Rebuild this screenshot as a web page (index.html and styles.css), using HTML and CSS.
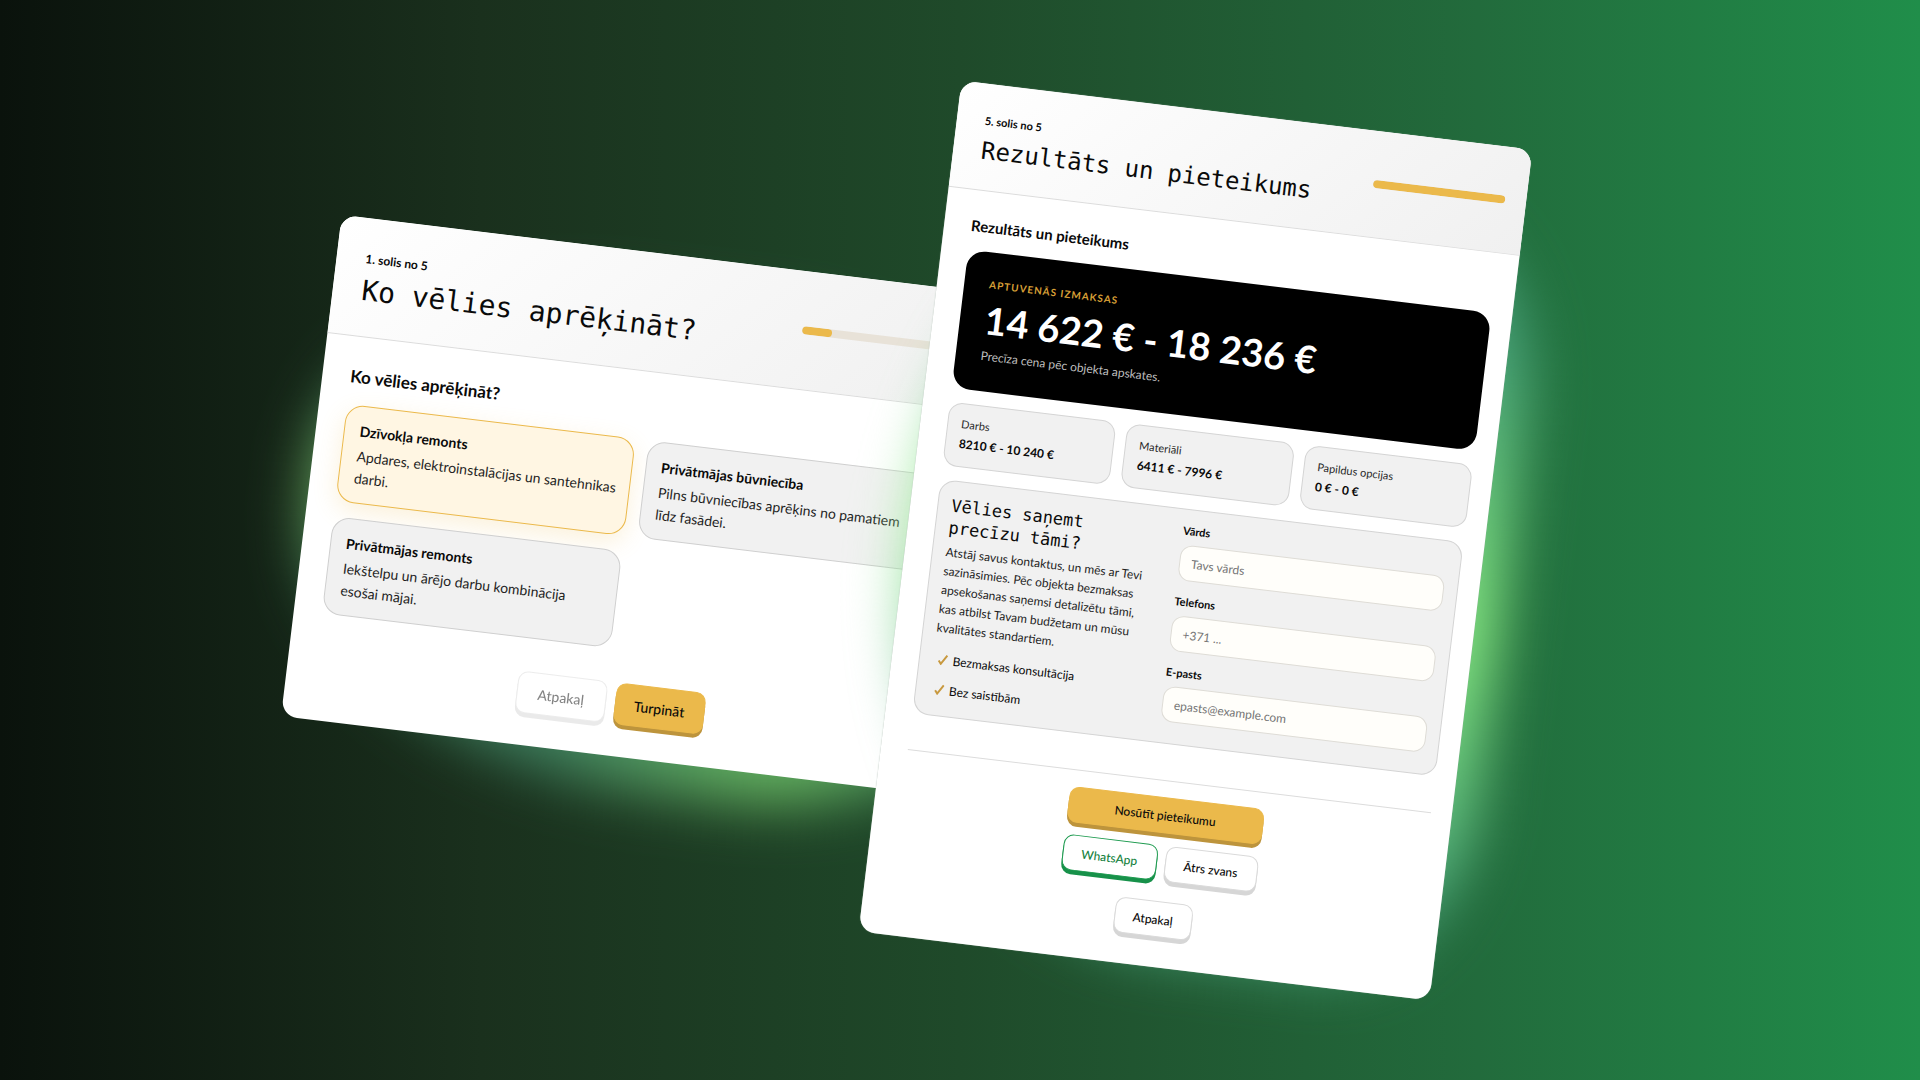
FILE: index.html
```html
<!DOCTYPE html>
<html lang="lv">
<head>
<meta charset="utf-8">
<meta name="viewport" content="width=device-width, initial-scale=1">
<title>Remonta kalkulators</title>
<link rel="stylesheet" href="styles.css">
</head>
<body>
<main class="stage">
  <section class="sheet sheet-start">
    <div class="glow"></div>
    <div class="panel">
      <header class="head">
        <div>
          <p class="step">1. solis no 5</p>
          <h1 class="title">Ko vēlies aprēķināt?</h1>
        </div>
        <div class="progress"><div class="progress-fill" style="width:20%"></div></div>
      </header>
      <div class="body">
        <h2 class="subtitle">Ko vēlies aprēķināt?</h2>
        <div class="options">
          <article class="option option-selected">
            <h3>Dzīvokļa remonts</h3>
            <p>Apdares, elektroinstalācijas un santehnikas darbi.</p>
          </article>
          <article class="option">
            <h3>Privātmājas būvniecība</h3>
            <p>Pilns būvniecības aprēķins no pamatiem līdz fasādei.</p>
          </article>
          <article class="option">
            <h3>Privātmājas remonts</h3>
            <p>Iekštelpu un ārējo darbu kombinācija esošai mājai.</p>
          </article>
        </div>
        <div class="actions">
          <button class="btn" type="button" disabled>Atpakaļ</button>
          <button class="btn btn-primary" type="button">Turpināt</button>
        </div>
      </div>
    </div>
  </section>

  <section class="sheet sheet-result">
    <div class="glow"></div>
    <div class="panel">
      <header class="head">
        <div>
          <p class="step">5. solis no 5</p>
          <h1 class="title">Rezultāts un pieteikums</h1>
        </div>
        <div class="progress"><div class="progress-fill" style="width:100%"></div></div>
      </header>
      <form class="body">
        <h2 class="subtitle">Rezultāts un pieteikums</h2>
        <div class="total">
          <p class="total-label">Aptuvenās izmaksas</p>
          <p class="total-price">14 622 € - 18 236 €</p>
          <p class="total-note">Precīza cena pēc objekta apskates.</p>
        </div>
        <div class="stats">
          <div class="stat"><span>Darbs</span><strong>8210 € - 10 240 €</strong></div>
          <div class="stat"><span>Materiāli</span><strong>6411 € - 7996 €</strong></div>
          <div class="stat"><span>Papildus opcijas</span><strong>0 € - 0 €</strong></div>
        </div>
        <div class="contact">
          <div class="pitch">
            <h3>Vēlies saņemt precīzu tāmi?</h3>
            <p>Atstāj savus kontaktus, un mēs ar Tevi sazināsimies. Pēc objekta bezmaksas apsekošanas saņemsi detalizētu tāmi, kas atbilst Tavam budžetam un mūsu kvalitātes standartiem.</p>
            <ul>
              <li><svg class="tick" viewBox="0 0 10 12"><path d="M1 7.5 3.4 10.5 9 1.5"/></svg>Bezmaksas konsultācija</li>
              <li><svg class="tick" viewBox="0 0 10 12"><path d="M1 7.5 3.4 10.5 9 1.5"/></svg>Bez saistībām</li>
            </ul>
          </div>
          <div class="fields">
            <label for="name">Vārds</label>
            <input id="name" type="text" placeholder="Tavs vārds">
            <label for="phone">Telefons</label>
            <input id="phone" type="tel" placeholder="+371 ...">
            <label for="email">E-pasts</label>
            <input id="email" type="email" placeholder="epasts@example.com">
          </div>
        </div>
        <div class="submit">
          <div class="submit-grid">
            <button class="btn btn-primary btn-wide" type="button">Nosūtīt pieteikumu</button>
            <button class="btn btn-whatsapp" type="button">WhatsApp</button>
            <button class="btn" type="button">Ātrs zvans</button>
          </div>
          <button class="btn btn-back" type="button">Atpakaļ</button>
        </div>
      </form>
    </div>
  </section>
</main>
</body>
</html>
```
FILE: styles.css
```css
* { box-sizing: border-box; }
body, h1, h2, h3, p, ul { margin: 0; }
ul { padding: 0; list-style: none; }
body {
  font-family: Lato, "Open Sans", sans-serif;
  color: #0a0a0a;
  overflow: hidden;
}

/* canvas holding the two tilted sheets */
.stage {
  display: flex;
  justify-content: center;
  align-items: center;
  min-height: 100vh;
  padding-right: 128px;
  background: linear-gradient(90deg, #0a120c 0%, #1a301d 25%, #1f4a2a 50%, #226b3c 77%, #208e4a 100%);
}
.sheet {
  position: relative;
  flex: none;
  transform: rotate(6.9deg);
}
.sheet-start { width: 650px; margin-bottom: 72px; }
.sheet-result { width: 575px; margin-left: -51px; }
.panel {
  position: relative;
  overflow: hidden;
  background: #fff;
  border-radius: 16px;
}
.sheet-result .panel { box-shadow: 0 0 1px #9fb0a4; }
.glow {
  position: absolute;
  filter: blur(28px);
}
.sheet-start .glow {
  inset: 50px -90px -30px 4px;
  border-radius: 40% 40% 40% 50%;
  background:
    radial-gradient(circle at 0% 45%, #79bb66, transparent 140px),
    radial-gradient(circle at 68% 100%, #6cbd62, transparent 240px),
    #3f8060;
}
.sheet-result .glow {
  inset: 70px -24px 16px 4px;
  border-radius: 50% 24% 24% 50%;
  background:
    radial-gradient(circle at 100% 54%, #8df084, transparent 290px),
    radial-gradient(circle at 0% 46%, #a4f49c, transparent 280px),
    #4aa57c;
}

.head {
  display: flex;
  align-items: center;
  justify-content: space-between;
  border-bottom: 1px solid #dcdcdc;
  background: linear-gradient(135deg, #fff, #f0f0f0);
}
.sheet-start .head { height: 119px; padding: 0 29px; }
.sheet-result .head { height: 107px; padding: 0 21px 0 28px; }
.title { font-family: "DejaVu Sans Mono", monospace; font-weight: 400; }
.step { margin-top: 12px; line-height: 16px; font-weight: 700; }
.sheet-start .step { font-size: 12px; }
.sheet-result .step { font-size: 11px; }
.sheet-start .title { font-size: 28px; line-height: 48px; }
.sheet-result .title { font-size: 24px; line-height: 44px; }
.progress {
  height: 8px;
  border-radius: 4px;
  background: #e8e2d8;
  overflow: hidden;
}
.sheet-start .progress { width: 150px; }
.sheet-result .progress { width: 133px; }
.progress-fill { height: 100%; border-radius: 4px; background: #ebb94b; }

.sheet-start .body { padding: 28px 28px 32px; }
.sheet-result .body { padding: 25px 21px 30px 27px; }
.subtitle { font-weight: 700; }
.sheet-start .subtitle { font-size: 17px; line-height: 24px; }
.sheet-result .subtitle { font-size: 15px; line-height: 20px; }

.options {
  display: grid;
  grid-template-columns: 1fr 1fr;
  gap: 15px 13px;
  margin-top: 16px;
}
.option {
  height: 98px;
  padding: 15px 12px 0 15px;
  border: 1px solid #cfcfcf;
  border-radius: 18px;
  background: #f1f1f1;
}
.option-selected {
  border-color: #ebb94b;
  background: #fff6e3;
  box-shadow: 0 8px 24px #ebb94b33;
}
.option h3 { font-size: 14px; line-height: 20px; font-weight: 700; }
.option p { margin-top: 4px; font-size: 14px; line-height: 22px; color: #1f1f1f; }

.actions { display: flex; justify-content: center; gap: 9px; margin-top: 33px; }
.btn {
  height: 36px;
  padding: 0;
  border: 1px solid #dadada;
  border-radius: 10px;
  background: #fff;
  box-shadow: 0 4px 0 #d6d6d6;
  color: #0a0a0a;
  font: 500 12px Lato, sans-serif;
}
.btn:disabled { opacity: 0.5; }
.actions .btn { width: 90px; height: 42px; font-size: 14px; }
.btn-primary { border-color: #ebb94b; background: #ebb94b; box-shadow: 0 4px 0 #bd943c; }
.btn-whatsapp { border-color: #1c9a4e; box-shadow: 0 4px 0 #17914a; color: #17833f; }

.total {
  height: 139px;
  margin-top: 15px;
  padding: 24px 25px 0;
  border-radius: 18px;
  background: #000;
  color: #fff;
}
.total-label {
  color: #d79f36;
  font-size: 10px;
  font-weight: 700;
  line-height: 16px;
  letter-spacing: 1px;
  text-transform: uppercase;
}
.total-price { font-size: 38px; font-weight: 700; line-height: 54px; white-space: nowrap; }
.total-note { font-size: 12px; line-height: 20px; color: #bdbdbd; }

.stats { display: grid; grid-template-columns: repeat(3, 1fr); gap: 11px; margin-top: 14px; }
.stat {
  display: flex;
  flex-direction: column;
  height: 64px;
  padding: 10px 13px;
  border: 1px solid #d4d4d4;
  border-radius: 14px;
  background: #f1f1f1;
}
.stat span { font-size: 11px; line-height: 20px; color: #2a2a2a; }
.stat strong { font-size: 12px; line-height: 20px; }

.contact {
  display: grid;
  grid-template-columns: 1fr 266px;
  gap: 24px;
  height: 236px;
  margin-top: 14px;
  padding: 13px;
  border: 1px solid #d4d4d4;
  border-radius: 16px;
  background: #f1f1f1;
}
.pitch { min-width: 0; }
.pitch h3 { margin-right: 24px; font: 400 17px/22px "DejaVu Sans Mono", monospace; }
.pitch p { margin-top: 4px; font-size: 12px; line-height: 19px; color: #1f1f1f; }
.pitch ul { margin-top: 7px; }
.pitch li { display: flex; align-items: center; gap: 5px; height: 30px; padding-left: 5px; font-size: 12px; }
.tick { width: 10px; height: 12px; fill: none; stroke: #c8993f; stroke-width: 2; }
.fields { display: flex; flex-direction: column; }
.fields label { font-size: 11px; font-weight: 700; line-height: 16px; margin-bottom: 6px; }
.fields input {
  width: 100%;
  height: 36px;
  margin-bottom: 13px;
  padding: 0 11px;
  border: 1px solid #dedcd6;
  border-radius: 12px;
  background: #fffefa;
  font: 400 12px Lato, sans-serif;
}
.fields input::placeholder { color: #757575; opacity: 1; }

.submit {
  display: flex;
  flex-direction: column;
  align-items: center;
  gap: 20px;
  margin-top: 36px;
  padding-top: 16px;
  border-top: 1px solid #dcdcdc;
}
.submit-grid { display: grid; grid-template-columns: 95px 93px; gap: 12px 8px; }
.btn-wide { grid-column: 1 / -1; }
.btn-back { width: 78px; }
```
